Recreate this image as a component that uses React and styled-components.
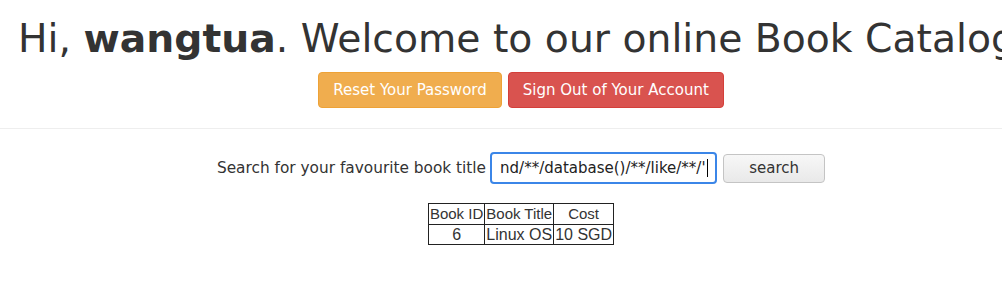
import React from "react";
import styled, { createGlobalStyle } from "styled-components";

const GlobalStyle = createGlobalStyle`
  html, body {
    margin: 0;
    padding: 0;
    background: #fff;
    overflow: hidden;
  }
  body {
    font-family: "DejaVu Sans", sans-serif;
    color: #333;
  }
`;

const Header = styled.header`
  width: 1006px;
  margin-left: 18px;
  padding-top: 17px;
  padding-bottom: 20px;
`;

const Title = styled.h1`
  margin: 0;
  font-size: 39.3px;
  font-weight: 400;
  line-height: 44px;
  white-space: nowrap;
  text-align: left;
  color: #333;
  b {
    font-weight: 700;
  }
`;

const Actions = styled.div`
  display: flex;
  justify-content: center;
  gap: 6px;
  margin-top: 11px;
`;

const Button = styled.button`
  font-family: "DejaVu Sans", sans-serif;
  font-size: 15px;
  line-height: 20px;
  padding: 7px 14px;
  border-radius: 4px;
  color: #fff;
  cursor: pointer;
  background: ${(p) => (p.variant === "danger" ? "#d9534f" : "#f0ad4e")};
  border: 1px solid ${(p) => (p.variant === "danger" ? "#d43f3a" : "#eea236")};
`;

const Divider = styled.hr`
  margin: 0;
  border: 0;
  border-top: 1px solid #eee;
`;

const Main = styled.main`
  width: 1006px;
  margin-left: 18px;
  display: flex;
  flex-direction: column;
  align-items: center;
  padding-top: 23px;
`;

const SearchForm = styled.form`
  display: flex;
  align-items: center;
  gap: 4px;
`;

const Label = styled.label`
  font-size: 15.35px;
  color: #333;
`;

const SearchBox = styled.div`
  box-sizing: border-box;
  width: 227px;
  height: 32px;
  border: 2px solid #3b86e8;
  border-radius: 4px;
  padding: 0 8px;
  display: flex;
  align-items: center;
  justify-content: flex-end;
  overflow: hidden;
  white-space: nowrap;
  font-size: 15px;
  color: #222;
`;

const Caret = styled.span`
  display: inline-block;
  width: 1px;
  height: 18px;
  background: #000;
  margin-left: 1px;
`;

const SearchButton = styled.button`
  box-sizing: border-box;
  width: 102px;
  height: 29px;
  margin-left: 2px;
  font-family: "DejaVu Sans", sans-serif;
  font-size: 15px;
  color: #333;
  border: 1px solid #c4c4c4;
  border-radius: 4px;
  background: linear-gradient(#f7f7f7, #e9e9e9);
`;

const Table = styled.table`
  margin-top: 19px;
  border-collapse: collapse;
  font-family: "Liberation Sans", Arial, sans-serif;
  color: #333;
`;

const Cell = styled.td`
  border: 1px solid #222;
  padding: 1px;
  text-align: center;
  font-size: ${(p) => (p.head ? "15px" : "16px")};
  line-height: ${(p) => (p.head ? "18px" : "17px")};
`;

const books = [{ id: 6, title: "Linux OS", cost: "10 SGD" }];

export default function App() {
  return (
    <>
      <GlobalStyle />
      <Header>
        <Title>
          Hi, <b>wangtua</b>. Welcome to our online Book Catalog
        </Title>
        <Actions>
          <Button variant="warning">Reset Your Password</Button>
          <Button variant="danger">Sign Out of Your Account</Button>
        </Actions>
      </Header>
      <Divider />
      <Main>
        <SearchForm onSubmit={(e) => e.preventDefault()}>
          <Label>Search for your favourite book title</Label>
          <SearchBox>
            nd/**/database()/**/like/**/'
            <Caret />
          </SearchBox>
          <SearchButton type="submit">search</SearchButton>
        </SearchForm>
        <Table>
          <tbody>
            <tr>
              <Cell head>Book ID</Cell>
              <Cell head>Book Title</Cell>
              <Cell head>Cost</Cell>
            </tr>
            {books.map((b) => (
              <tr key={b.id}>
                <Cell>{b.id}</Cell>
                <Cell>{b.title}</Cell>
                <Cell>{b.cost}</Cell>
              </tr>
            ))}
          </tbody>
        </Table>
      </Main>
    </>
  );
}
